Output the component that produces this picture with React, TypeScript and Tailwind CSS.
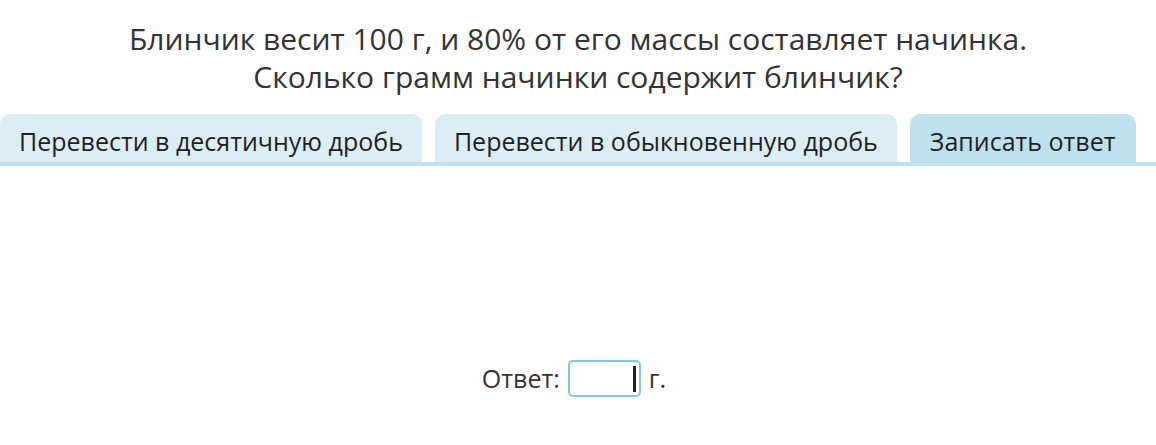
export default function App() {
  const tabs = [
    { label: "Перевести в десятичную дробь", active: false },
    { label: "Перевести в обыкновенную дробь", active: false },
    { label: "Записать ответ", active: true },
  ];

  return (
    <div className="w-[1156px] h-[445px] bg-white font-['Open_Sans',sans-serif] text-[#333]">
      <div className="pt-[20px] text-center text-[30px] leading-[38px]">
        <p>Блинчик весит 100 г, и 80% от его массы составляет начинка.</p>
        <p>Сколько грамм начинки содержит блинчик?</p>
      </div>

      <div className="mt-[18px] flex gap-[13px] border-b-4 border-[#bfe0ee]">
        {tabs.map((tab) => (
          <div
            key={tab.label}
            className={`h-[48px] px-[19px] pt-[10px] rounded-t-[10px] text-[25px] leading-[34px] text-[#1f1f1f] ${tab.active ? "bg-[#bfe1ef] px-[20px]" : "bg-[#dcedf5]"}`}
          >
            {tab.label}
          </div>
        ))}
      </div>

      <div className="mt-[194px] flex items-center justify-center gap-[8px] pr-[8px] text-[25px] text-[#333]">
        <span>Ответ:</span>
        <div className="relative w-[73px] h-[37px] rounded-[5px] border-2 border-[#82c9e4] bg-white">
          <div className="absolute right-[3px] top-[4px] w-[3px] h-[26px] bg-[#222]" />
        </div>
        <span>г.</span>
      </div>
    </div>
  );
}
